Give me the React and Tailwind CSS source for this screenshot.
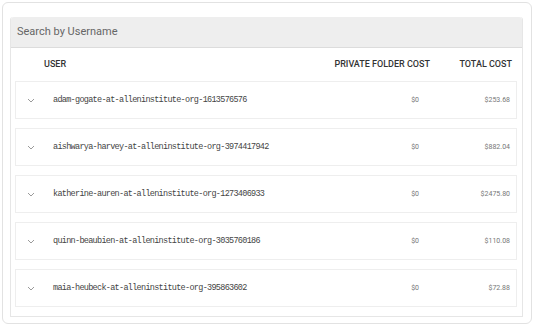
const rows = [
  { name: 'adam-gogate-at-alleninstitute-org-1613576576', priv: '$0', total: '$253.68' },
  { name: 'aishwarya-harvey-at-alleninstitute-org-3974417942', priv: '$0', total: '$882.04' },
  { name: 'katherine-auren-at-alleninstitute-org-1273406933', priv: '$0', total: '$2475.80' },
  { name: 'quinn-beaubien-at-alleninstitute-org-3035760186', priv: '$0', total: '$110.08' },
  { name: 'maia-heubeck-at-alleninstitute-org-395863602', priv: '$0', total: '$72.88' },
];

function Chevron() {
  return (
    <svg width="8" height="5" viewBox="0 0 8 5" className="shrink-0">
      <path d="M1 1 L4 4 L7 1" fill="none" stroke="#9a9a9a" strokeWidth="1" />
    </svg>
  );
}

export default function App() {
  return (
    <div className="w-[534px] h-[325px] bg-white p-[2px] font-['Roboto',sans-serif]">
      <div className="w-[530px] h-[322px] border border-[#e2e2e2] rounded-md pl-[7px] pt-[14px]">
        <div className="w-[513px] h-[300px] border border-t-0 border-[#e6e6e6] rounded-t-[3px]">
          <div className="h-[31px] bg-[#eeeeee] border-b border-[#dcdcdc] rounded-t-[3px] flex items-center pl-[6px] text-[11px] text-[#666]">
            Search by Username
          </div>
          <div className="h-[33px] flex items-center text-[9px] font-medium text-[#333]">
            <div className="pl-[33px] flex-1">USER</div>
            <div className="w-[110px] text-right pr-[10px]">PRIVATE FOLDER COST</div>
            <div className="w-[82px] text-right pr-[10px]">TOTAL COST</div>
          </div>
          <div className="flex flex-col gap-[9px] pl-[4px]">
            {rows.map((r) => (
              <div
                key={r.name}
                className="w-[502px] h-[38px] border border-[#eeeeee] flex items-center"
              >
                <div className="w-[37px] pl-[11px]">
                  <Chevron />
                </div>
                <div className="flex-1 font-['Liberation_Mono',monospace] text-[8.5px] tracking-[-0.7px] text-[#444]">
                  {r.name}
                </div>
                <div className="w-[60px] text-right text-[7px] text-[#777]">{r.priv}</div>
                <div className="w-[97px] text-right text-[7px] text-[#777] pr-[6px]">{r.total}</div>
              </div>
            ))}
          </div>
        </div>
      </div>
    </div>
  );
}
